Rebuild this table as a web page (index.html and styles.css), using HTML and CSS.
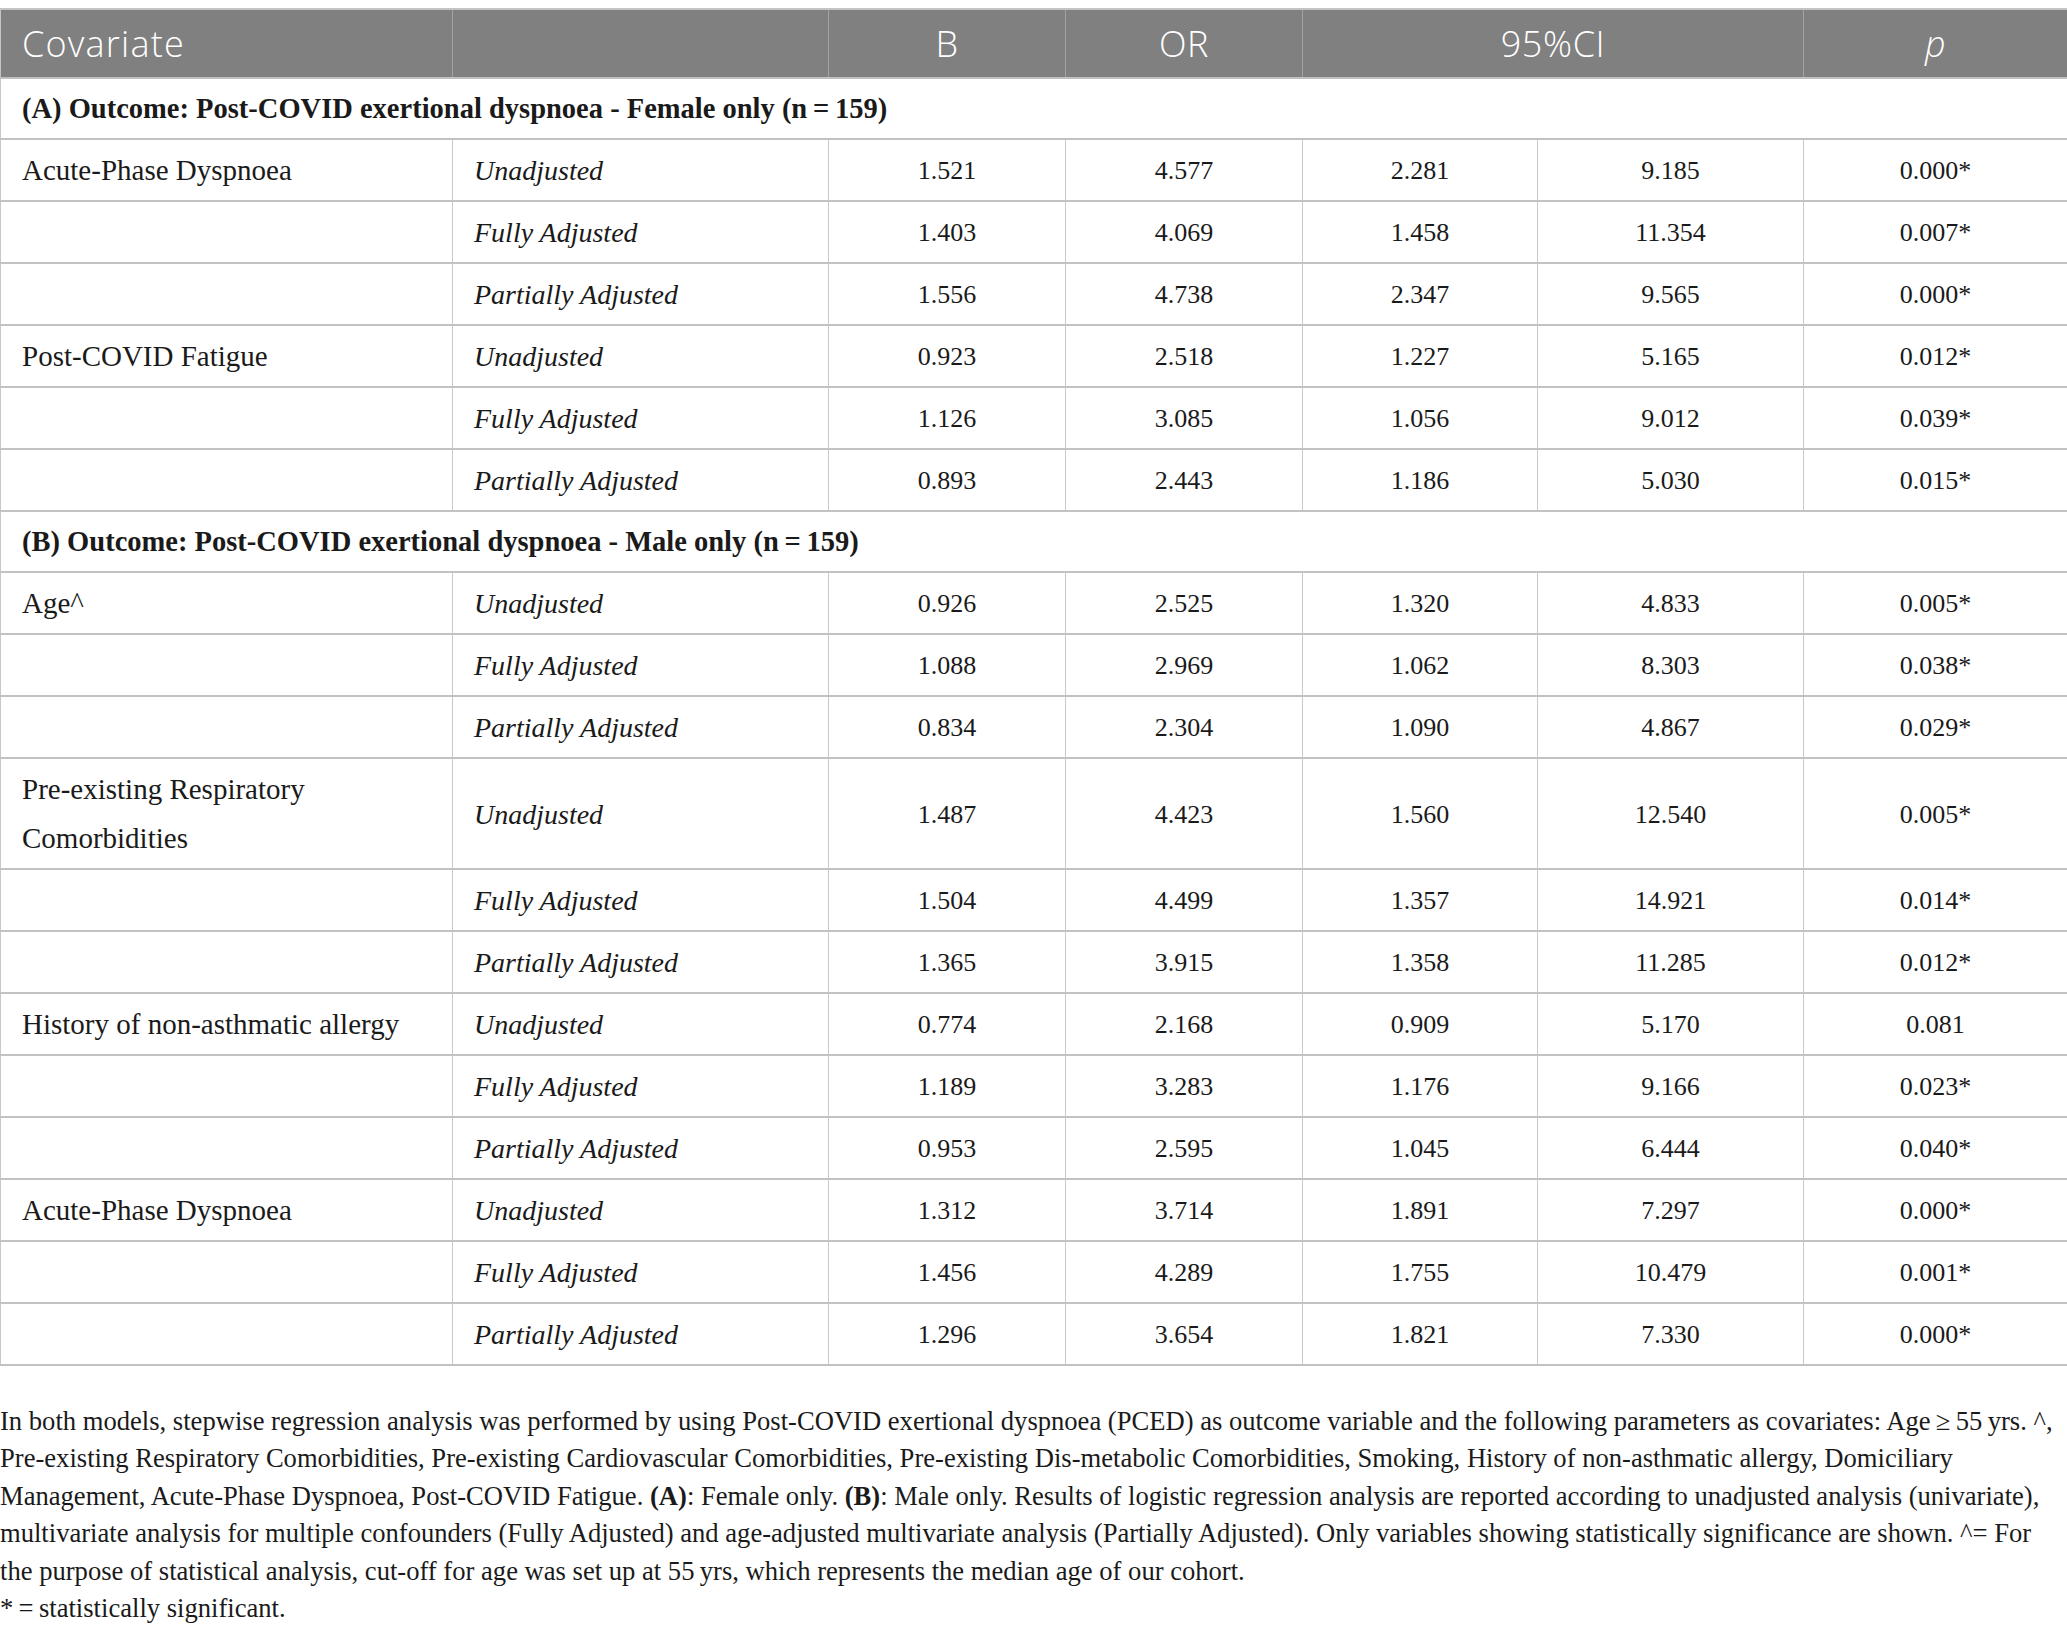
FILE: index.html
```html
<!DOCTYPE html>
<html lang="en">
<head>
<meta charset="utf-8">
<title>Logistic regression table</title>
<link rel="stylesheet" href="styles.css">
</head>
<body>
<table class="results">
  <colgroup>
    <col class="c-cov"><col class="c-model"><col class="c-b"><col class="c-or"><col class="c-lo"><col class="c-hi"><col class="c-p">
  </colgroup>
  <thead>
    <tr>
      <th class="left">Covariate</th>
      <th></th>
      <th>B</th>
      <th>OR</th>
      <th colspan="2">95%CI</th>
      <th><i>p</i></th>
    </tr>
  </thead>
  <tbody>
    <tr class="section"><td colspan="7">(A) Outcome: Post-COVID exertional dyspnoea - Female only (n&#8201;=&#8201;159)</td></tr>
    <tr><td class="cov">Acute-Phase Dyspnoea</td><td class="model">Unadjusted</td><td>1.521</td><td>4.577</td><td>2.281</td><td>9.185</td><td>0.000*</td></tr>
    <tr><td class="cov"></td><td class="model">Fully Adjusted</td><td>1.403</td><td>4.069</td><td>1.458</td><td>11.354</td><td>0.007*</td></tr>
    <tr><td class="cov"></td><td class="model">Partially Adjusted</td><td>1.556</td><td>4.738</td><td>2.347</td><td>9.565</td><td>0.000*</td></tr>
    <tr><td class="cov">Post-COVID Fatigue</td><td class="model">Unadjusted</td><td>0.923</td><td>2.518</td><td>1.227</td><td>5.165</td><td>0.012*</td></tr>
    <tr><td class="cov"></td><td class="model">Fully Adjusted</td><td>1.126</td><td>3.085</td><td>1.056</td><td>9.012</td><td>0.039*</td></tr>
    <tr><td class="cov"></td><td class="model">Partially Adjusted</td><td>0.893</td><td>2.443</td><td>1.186</td><td>5.030</td><td>0.015*</td></tr>
    <tr class="section"><td colspan="7">(B) Outcome: Post-COVID exertional dyspnoea - Male only (n&#8201;=&#8201;159)</td></tr>
    <tr><td class="cov">Age^</td><td class="model">Unadjusted</td><td>0.926</td><td>2.525</td><td>1.320</td><td>4.833</td><td>0.005*</td></tr>
    <tr><td class="cov"></td><td class="model">Fully Adjusted</td><td>1.088</td><td>2.969</td><td>1.062</td><td>8.303</td><td>0.038*</td></tr>
    <tr><td class="cov"></td><td class="model">Partially Adjusted</td><td>0.834</td><td>2.304</td><td>1.090</td><td>4.867</td><td>0.029*</td></tr>
    <tr><td class="cov">Pre-existing Respiratory Comorbidities</td><td class="model">Unadjusted</td><td>1.487</td><td>4.423</td><td>1.560</td><td>12.540</td><td>0.005*</td></tr>
    <tr><td class="cov"></td><td class="model">Fully Adjusted</td><td>1.504</td><td>4.499</td><td>1.357</td><td>14.921</td><td>0.014*</td></tr>
    <tr><td class="cov"></td><td class="model">Partially Adjusted</td><td>1.365</td><td>3.915</td><td>1.358</td><td>11.285</td><td>0.012*</td></tr>
    <tr><td class="cov">History of non-asthmatic allergy</td><td class="model">Unadjusted</td><td>0.774</td><td>2.168</td><td>0.909</td><td>5.170</td><td>0.081</td></tr>
    <tr><td class="cov"></td><td class="model">Fully Adjusted</td><td>1.189</td><td>3.283</td><td>1.176</td><td>9.166</td><td>0.023*</td></tr>
    <tr><td class="cov"></td><td class="model">Partially Adjusted</td><td>0.953</td><td>2.595</td><td>1.045</td><td>6.444</td><td>0.040*</td></tr>
    <tr><td class="cov">Acute-Phase Dyspnoea</td><td class="model">Unadjusted</td><td>1.312</td><td>3.714</td><td>1.891</td><td>7.297</td><td>0.000*</td></tr>
    <tr><td class="cov"></td><td class="model">Fully Adjusted</td><td>1.456</td><td>4.289</td><td>1.755</td><td>10.479</td><td>0.001*</td></tr>
    <tr><td class="cov"></td><td class="model">Partially Adjusted</td><td>1.296</td><td>3.654</td><td>1.821</td><td>7.330</td><td>0.000*</td></tr>
  </tbody>
</table>
<div class="notes">
  <p>In both models, stepwise regression analysis was performed by using Post-COVID exertional dyspnoea (PCED) as outcome variable and the following parameters as covariates: Age&#8201;&ge;&#8201;55&#8201;yrs. ^,<br>Pre-existing Respiratory Comorbidities, Pre-existing Cardiovascular Comorbidities, Pre-existing Dis-metabolic Comorbidities, Smoking, History of non-asthmatic allergy, Domiciliary<br>Management, Acute-Phase Dyspnoea, Post-COVID Fatigue. <b>(A)</b>: Female only. <b>(B)</b>: Male only. Results of logistic regression analysis are reported according to unadjusted analysis (univariate),<br>multivariate analysis for multiple confounders (Fully Adjusted) and age-adjusted multivariate analysis (Partially Adjusted). Only variables showing statistically significance are shown. ^= For<br>the purpose of statistical analysis, cut-off for age was set up at 55&#8201;yrs, which represents the median age of our cohort.</p>
  <p>*&#8201;=&#8201;statistically significant.</p>
</div>
</body>
</html>
```
FILE: styles.css
```css
html, body {
  background: #ffffff;
}
body {
  margin: 8px 0 0 0;
  font-family: "Liberation Serif", "Times New Roman", serif;
  color: #1a1a1a;
}
.results {
  width: 2067px;
  border-collapse: collapse;
  table-layout: fixed;
  font-size: 26px;
}
.c-cov { width: 452px; }
.c-model { width: 376px; }
.c-b { width: 237px; }
.c-or { width: 237px; }
.c-lo { width: 235px; }
.c-hi { width: 266px; }
.c-p { width: 264px; }

.results th {
  background: #808080;
  color: #ffffff;
  font-family: "Open Sans", "Liberation Sans", sans-serif;
  font-weight: 300;
  font-size: 36px;
  letter-spacing: 0.6px;
  line-height: 49px;
  padding: 9px 21px 9px;
  text-align: center;
  border-top: 2px solid #c4c4c4;
  border-bottom: 2px solid #c0c0c0;
  border-left: 1px solid #a3a3a3;
  border-right: 1px solid #a3a3a3;
}
.results th.left {
  text-align: left;
  letter-spacing: 1.2px;
}
.results th:first-child { border-left-color: #c4c4c4; }
.results th:last-child { border-right-color: #c4c4c4; }

.results td {
  line-height: 49px;
  padding: 6px 21px 5px;
  text-align: center;
  vertical-align: middle;
  border-top: 2px solid #c2c2c2;
  border-bottom: 2px solid #c2c2c2;
  border-left: 1px solid #c8c8c8;
  border-right: 1px solid #c8c8c8;
}
.results td.cov {
  text-align: left;
  font-size: 29px;
}
.results td.model {
  text-align: left;
  font-style: italic;
  font-size: 28px;
}
.results tr.section td {
  text-align: left;
  font-weight: 700;
  font-size: 28.5px;
  padding: 5px 21px 5px;
}
.notes {
  margin-top: 37px;
  font-size: 26.6px;
  line-height: 37.4px;
  white-space: nowrap;
}
.notes p {
  margin: 0;
}
```
